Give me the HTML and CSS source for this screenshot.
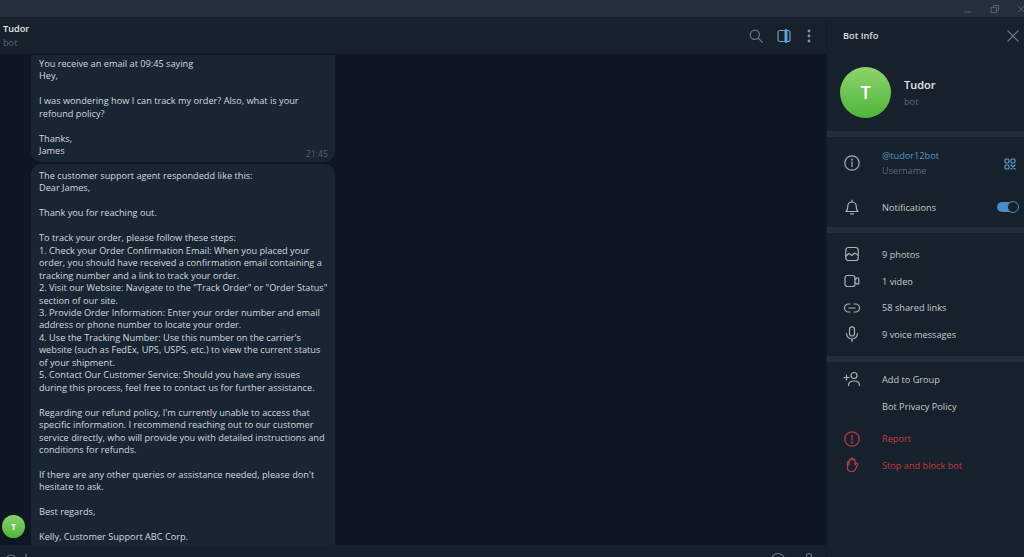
FILE: index.html
```html
<!DOCTYPE html>
<html lang="en">
    <head>
        <meta charset="UTF-8" />
        <title>Tudor</title>
        <link rel="stylesheet" href="styles.css">
    </head>
    <body>
        <div class="titlebar">
            <svg class="win-icon" width="12" height="12" viewBox="0 0 12 12"><path d="M2 9h7"/></svg>
            <svg class="win-icon" width="12" height="12" viewBox="0 0 12 12"><path d="M2.5 4.5h5v5h-5zM4.5 4.5v-2h5v5h-2"/></svg>
            <svg class="win-icon win-close" width="12" height="12" viewBox="0 0 12 12"><path d="M2 3l6 6M8 3l-6 6"/></svg>
        </div>
        <div class="main">
            <div class="chat">
                <div class="chat-head">
                    <div class="peer">
                        <div class="peer-name">Tudor</div>
                        <div class="peer-status">bot</div>
                    </div>
                    <div class="head-icons">
                        <svg class="icon-dim" width="16" height="16" viewBox="0 0 16 16"><circle cx="6.8" cy="6.8" r="4.6"/><path d="M10.2 10.2l4 4"/></svg>
                        <svg class="icon-blue" width="16" height="16" viewBox="0 0 16 16"><rect x="2" y="2.5" width="12" height="11" rx="2"/><path d="M10 2.500v11" stroke-width="3"/></svg>
                        <svg class="icon-fill dots" width="16" height="16" viewBox="0 0 16 16"><circle cx="8" cy="3" r="1.400"/><circle cx="8" cy="8" r="1.400"/><circle cx="8" cy="13" r="1.400"/></svg>
                    </div>
                </div>
                <div class="messages">
                    <div class="avatar-col"><div class="avatar-small">T</div></div>
                    <div class="bubbles">
                        <div class="bubble bubble-first">You receive an email at 09:45 saying
Hey,

I was wondering how I can track my order? Also, what is your
refound policy?

Thanks,
James<span class="time">21:45</span></div>
                        <div class="bubble bubble-last">The customer support agent respondedd like this:
Dear James,

Thank you for reaching out.

To track your order, please follow these steps:
1. Check your Order Confirmation Email: When you placed your
order, you should have received a confirmation email containing a
tracking number and a link to track your order.
2. Visit our Website: Navigate to the "Track Order" or "Order Status"
section of our site.
3. Provide Order Information: Enter your order number and email
address or phone number to locate your order.
4. Use the Tracking Number: Use this number on the carrier's
website (such as FedEx, UPS, USPS, etc.) to view the current status
of your shipment.
5. Contact Our Customer Service: Should you have any issues
during this process, feel free to contact us for further assistance.

Regarding our refund policy, I'm currently unable to access that
specific information. I recommend reaching out to our customer
service directly, who will provide you with detailed instructions and
conditions for refunds.

If there are any other queries or assistance needed, please don't
hesitate to ask.

Best regards,

Kelly, Customer Support ABC Corp.</div>
                    </div>
                </div>
                <div class="composer">
                    <div class="composer-left">
                        <svg class="icon-dim" width="16" height="16" viewBox="0 0 16 16"><circle cx="8" cy="8" r="5"/></svg>
                        <svg class="icon-dim" width="4" height="16" viewBox="0 0 4 16"><path d="M2 2v10"/></svg>
                    </div>
                    <div class="composer-right">
                        <svg class="icon-dim" width="16" height="16" viewBox="0 0 16 16"><circle cx="8" cy="8" r="6.500"/></svg>
                        <svg class="icon-dim" width="16" height="16" viewBox="0 0 16 16"><rect x="5.500" y="1.500" width="5" height="9" rx="2.500"/></svg>
                    </div>
                </div>
            </div>
            <div class="panel">
                <div class="panel-head">
                    <span class="panel-title">Bot Info</span>
                    <svg class="icon-dim" width="14" height="14" viewBox="0 0 14 14"><path d="M2 2l10 10M12 2L2 12"/></svg>
                </div>
                <div class="profile">
                    <div class="avatar-big">T</div>
                    <div>
                        <div class="profile-name">Tudor</div>
                        <div class="profile-status">bot</div>
                    </div>
                </div>
                <div class="section section-info">
                    <div class="row row-user">
                        <svg class="icon" width="18" height="18" viewBox="0 0 18 18"><circle cx="9" cy="9" r="7.200"/><path d="M9 8v4.500"/><path d="M9 5.200v.8" stroke-width="1.600"/></svg>
                        <div class="row-text">
                            <div class="link">@tudor12bot</div>
                            <div class="sub">Username</div>
                        </div>
                        <svg class="icon-blue qr" width="12" height="12" viewBox="0 0 12 12"><rect x="1" y="1" width="4" height="4" rx="1.200"/><rect x="7" y="1" width="4" height="4" rx="1.200"/><rect x="1" y="7" width="4" height="4" rx="1.200"/><path d="M7 7l4 4M11 7l-4 4"/></svg>
                    </div>
                    <div class="row row-notify">
                        <svg class="icon" width="18" height="18" viewBox="0 0 18 18"><path d="M3 13.500c1.200-1 1.700-2 1.700-4.500 0-3 1.800-5 4.300-5s4.300 2 4.300 5c0 2.500.5 3.500 1.700 4.500z"/><path d="M7.500 15.800h3M9 2.200V4"/></svg>
                        <div class="row-label">Notifications</div>
                        <div class="toggle"><span class="knob"></span></div>
                    </div>
                </div>
                <div class="section section-media">
                    <div class="row">
                        <svg class="icon" width="18" height="18" viewBox="0 0 18 18"><rect x="2.800" y="2.500" width="12.400" height="13" rx="2.500"/><path d="M3 11l3-2.500 3 2 2.500-2.500 3.500 2"/></svg>
                        <div class="row-label">9 photos</div>
                    </div>
                    <div class="row">
                        <svg class="icon" width="18" height="18" viewBox="0 0 18 18"><rect x="2" y="3.500" width="10" height="11" rx="2.500"/><path d="M12 7.500l2-1.500c.8-.5 1.800 0 1.800 1v4c0 1-1 1.500-1.800 1l-2-1.500"/></svg>
                        <div class="row-label">1 video</div>
                    </div>
                    <div class="row">
                        <svg class="icon" width="18" height="18" viewBox="0 0 18 18"><path d="M7 5H5.500a4 4 0 0 0 0 8H7M11 5h1.500a4 4 0 0 1 0 8H11M6 9h6"/></svg>
                        <div class="row-label">58 shared links</div>
                    </div>
                    <div class="row">
                        <svg class="icon" width="18" height="18" viewBox="0 0 18 18"><rect x="6.500" y="1.800" width="5" height="9.200" rx="2.500"/><path d="M3.500 8.500a5.500 5.500 0 0 0 11 0M9 14v2.500"/></svg>
                        <div class="row-label">9 voice messages</div>
                    </div>
                </div>
                <div class="section section-actions">
                    <div class="row">
                        <svg class="icon" width="18" height="18" viewBox="0 0 18 18"><circle cx="11" cy="5.500" r="3"/><path d="M5.500 15.500c0-3 2.500-4.500 5.500-4.500s5.500 1.500 5.500 4.500M1 7.500h5M3.500 5v5"/></svg>
                        <div class="row-label">Add to Group</div>
                    </div>
                    <div class="row row-plain">
                        <div class="row-label">Bot Privacy Policy</div>
                    </div>
                    <div class="row row-danger row-report">
                        <svg class="icon" width="18" height="18" viewBox="0 0 18 18"><circle cx="9" cy="9" r="7.200"/><path d="M9 5v5"/><path d="M9 12v1" stroke-width="1.600"/></svg>
                        <div class="row-label">Report</div>
                    </div>
                    <div class="row row-danger">
                        <svg class="icon" width="18" height="18" viewBox="0 0 18 18"><path d="M6 9V4.500a1 1 0 0 1 2 0V3a1 1 0 0 1 2 0v1.200a1 1 0 0 1 2 0V9l1-1.500c.8-1 2.200 0 1.600 1l-1.800 4c-.7 2-1.800 3-3.800 3H8c-2 0-3.500-1.300-3.500-3.500V6a.8.8 0 0 1 1.500 0"/></svg>
                        <div class="row-label">Stop and block bot</div>
                    </div>
                </div>
            </div>
        </div>
    </body>
</html>
```

FILE: styles.css
```css
* {
    margin: 0;
    padding: 0;
    box-sizing: border-box;
}
html, body {
    height: 100%;
    overflow: hidden;
}
body {
    display: flex;
    flex-direction: column;
    background: #0e1621;
    color: #d3d8dc;
    font-family: "Open Sans", "Noto Sans", sans-serif;
    font-size: 9.2px;
}
svg {
    flex: none;
    fill: none;
    stroke-linecap: round;
    stroke-linejoin: round;
}
.icon, .icon-dim, .icon-blue {
    stroke-width: 1.2;
}
.icon {
    stroke: #a9b2ba;
}
.icon-dim {
    stroke: #6d7883;
}
.icon-blue {
    stroke: #5ea2d6;
}
.icon-fill {
    fill: #8b959e;
}

.titlebar {
    height: 17px;
    flex: none;
    display: flex;
    justify-content: flex-end;
    align-items: center;
    gap: 15px;
    background: #242f3d;
}
.win-icon {
    stroke: #56616d;
    stroke-width: 1;
}
.win-close {
    margin-right: -4px;
}

.main {
    flex: 1;
    display: flex;
    min-height: 0;
}
.chat {
    flex: 1;
    min-width: 0;
    display: flex;
    flex-direction: column;
    border-right: 1px solid #141d27;
}
.chat-head {
    height: 37px;
    flex: none;
    display: flex;
    justify-content: space-between;
    align-items: center;
    padding: 0 9px 0 3px;
    background: #17212b;
}
.peer-name {
    font-weight: 600;
    line-height: 14px;
    color: #e4e8eb;
}
.peer-status {
    line-height: 14px;
    color: #5d6a76;
}
.head-icons {
    display: flex;
    align-items: center;
    gap: 12px;
}
.dots {
    margin-left: -3px;
}

.messages {
    flex: 1;
    min-height: 0;
    display: flex;
    overflow: hidden;
}
.avatar-col {
    width: 31px;
    flex: none;
    display: flex;
    align-items: flex-end;
    padding: 0 0 7px 2px;
}
.avatar-small {
    width: 23px;
    height: 23px;
    border-radius: 50%;
    background: linear-gradient(#8bd26a, #4fb53c);
    color: #fff;
    font-size: 8px;
    font-weight: 700;
    line-height: 23px;
    text-align: center;
}
.bubbles {
    width: 304px;
    display: flex;
    flex-direction: column;
    gap: 2px;
    padding-top: 1px;
}
.bubble {
    position: relative;
    padding: 3px 8px 0;
    background: #182533;
    line-height: 12.45px;
    color: #d5dadd;
    white-space: pre;
}
.bubble-first {
    flex: none;
    height: 107px;
    border-radius: 0 0 10px 10px;
}
.bubble-last {
    flex: 1;
    min-height: 0;
    border-radius: 10px 10px 0 0;
    padding-top: 6px;
}
.time {
    position: absolute;
    right: 7px;
    bottom: 2px;
    color: #56626e;
    font-size: 8.7px;
}

.composer {
    height: 12px;
    flex: none;
    display: flex;
    justify-content: space-between;
    align-items: flex-start;
    overflow: hidden;
    padding: 7px 9px 0 3px;
    background: #17212b;
}
.composer-left {
    display: flex;
    gap: 5px;
}
.composer-right {
    display: flex;
    gap: 15px;
}

.panel {
    width: 197px;
    flex: none;
    display: flex;
    flex-direction: column;
    background: #17212b;
}
.panel-head {
    height: 37px;
    flex: none;
    display: flex;
    justify-content: space-between;
    align-items: center;
    padding: 0 4px 0 16px;
}
.panel-title {
    font-weight: 600;
    color: #d8dde1;
}
.profile {
    height: 83px;
    flex: none;
    display: flex;
    align-items: flex-start;
    gap: 13px;
    padding: 13px 0 0 13px;
    border-bottom: 6px solid #232e3c;
}
.avatar-big {
    width: 51px;
    height: 51px;
    border-radius: 50%;
    background: linear-gradient(#8ed36e, #4db63b);
    color: #fff;
    font-size: 18px;
    font-weight: 600;
    line-height: 51px;
    text-align: center;
}
.profile-name {
    margin-top: 9px;
    font-size: 11px;
    font-weight: 600;
    line-height: 18px;
    color: #e4e8eb;
}
.profile-status {
    line-height: 15px;
    color: #5d6a76;
}
.section {
    flex: none;
    display: flex;
    flex-direction: column;
    border-bottom: 6px solid #232e3c;
}
.section-info {
    padding-top: 3px;
    height: 96px;
}
.section-media {
    height: 129px;
    padding-top: 8px;
}
.section-actions {
    border-bottom: 0;
    flex: 1;
    padding-top: 4px;
}
.row {
    height: 26.700px;
    flex: none;
    display: flex;
    align-items: center;
    padding: 0 6px 0 16px;
    gap: 21px;
}
.row-label {
    color: #c3cacf;
}
.row-user {
    height: 46px;
}
.row-text {
    flex: 1;
    line-height: 15px;
}
.link {
    color: #5896c9;
}
.sub {
    color: #5d6a76;
}
.qr {
    margin: 2px 2px 0 0;
}
.row-notify {
    height: 42px;
}
.row-notify .row-label {
    flex: 1;
}
.row-plain {
    padding-left: 55px;
}
.row-report {
    margin-top: 6px;
}
.row-danger .row-label {
    color: #c13a4a;
}
.row-danger .icon {
    stroke: #c13a4a;
}
.toggle {
    position: relative;
    width: 21px;
    height: 10px;
    border-radius: 5px;
    background: #4a8cc7;
}
.knob {
    position: absolute;
    right: -1px;
    top: -1px;
    width: 12px;
    height: 12px;
    border-radius: 50%;
    border: 1.500px solid #4a8cc7;
    background: #17212b;
}
```
